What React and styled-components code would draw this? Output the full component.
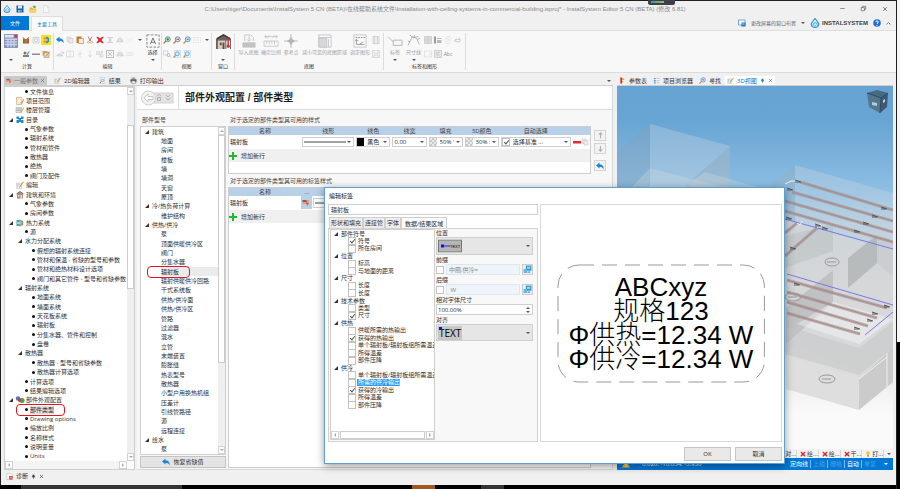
import React, { useState } from 'react';
import styled, { createGlobalStyle, css } from 'styled-components';

const GlobalStyle = createGlobalStyle`
  * {
    box-sizing: border-box;
  }

  html, body, #root {
    height: 100%;
    margin: 0;
  }

  body {
    background: #000;
    color: #2e2e2e;
    font-family: "Open Sans", "Noto Sans CJK SC", sans-serif;
    font-size: 6px;
    line-height: 8px;
  }

  button, input, select {
    font: inherit;
    color: inherit;
    margin: 0;
    padding: 0;
    border: 0;
    border-radius: 0;
    background: none;
    min-width: 0;
  }

  ul {
    list-style: none;
    margin: 0;
    padding: 0;
  }
`;

/* ---------- icons, all drawn on a 16 x 16 grid ---------- */

const GREY = '#c3c5c8';

const ICONS = {
  drop: (
    <g fill="none" stroke="#2b94cf" strokeWidth="1.8">
      <path d="M8 1 C5 5 2 7.500 2 10.500 A5.500 4.500 0 0 0 8 15 A5.500 4.500 0 0 0 14 10.500 C14 7.500 11 5 8 1Z" />
      <path d="M5 13V9.500L8.500 7l3 2.500V14M8 14v-3.500" stroke="#49b7e8" />
    </g>
  ),
  save: (
    <g>
      <path d="M1 1h14v14H1z" fill="#1d5fa8" />
      <path d="M4 1h8v6H4z" fill="#dcebf8" />
      <path d="M4 10h8v5H4z" fill="#7db4e0" />
      <path d="M9 11h2v3H9z" fill="#1d5fa8" />
    </g>
  ),
  folder: (
    <g>
      <path d="M1 5h5l2 2h6v8H1z" fill="#e8b63c" />
      <path d="M3 9h13l-3 6H1z" fill="#f7d46a" />
      <path d="M6 4C8 1 11 1 12 2l1-1v5H8l2-2C9 3 8 3 6 4z" fill="#4aa84a" />
    </g>
  ),
  page: <path d="M3 1h7l4 4v10H3zM10 1v4h4" fill="#f6f6f6" stroke="#cfcfcf" />,
  calc: (
    <g>
      <rect x="0" y="0" width="16" height="16" rx="1" fill="#8592b5" />
      <path d="M1 1h10v3H1z" fill="#dfe6f5" />
      <path d="M12 1h3v3h-3z" fill="#d8323c" />
      <path d="M1 6h14M1 9h14M1 12h14M4.500 5v10M8 5v10M11.500 5v10" stroke="#c9d3ee" strokeWidth="1.600" />
    </g>
  ),
  crate: (
    <g>
      <path d="M2 6h12v9H2z" fill="#8c5a2c" />
      <path d="M1 2l5 3-3 1zM14 2L9 5l4 1z" fill="#d33" />
      <path d="M3 8h10M3 12h10M8 6v9" stroke="#e2a052" />
    </g>
  ),
  greyDoc: (
    <g fill="none" stroke={GREY} strokeWidth="1.400">
      <path d="M2 3h12v11H2zM5 6h6v5H5zM8 1v4" />
    </g>
  ),
  yellow: (
    <g>
      <path d="M-2 -2h20v20H-2z" fill="#ffe11c" />
      <path d="M3 3h4a5 5 0 0 1 0 10H3z" fill="#f08a24" />
      <path d="M8 3a5 5 0 0 1 0 10" stroke="#2496d8" strokeWidth="3" fill="none" />
      <path d="M2 8h9" stroke="#fff" strokeWidth="1.500" />
    </g>
  ),
  person: (
    <g>
      <path d="M2 10h12v4H2z" fill="#71869a" />
      <circle cx="6" cy="6" r="3" fill="#9b6a44" />
      <path d="M9 8l5-6 1 2-4 6z" fill="#4c91c6" />
    </g>
  ),
  bar: <path d="M0 7h16v3H0z" fill="#8b8b8b" />,
  boxPen: (
    <g>
      <path d="M1 2h10v9H1z" fill="#caa878" />
      <path d="M4 5h10v10H4z" fill="#e7d7b6" stroke="#9c8355" />
      <path d="M15 3l-7 8-2 3 3-2 7-8z" fill="#d07b2c" />
    </g>
  ),
  undo: (
    <g>
      <path d="M0 7L7 1v4c6-1 9 4 8 10-1-4-4-5-8-5v3z" fill="#2183d8" />
    </g>
  ),
  copy: (
    <g fill="#ececec" stroke="#bdbdbd">
      <path d="M2 2h8v9H2z" />
      <path d="M6 5h8v9H6z" />
    </g>
  ),
  paste: (
    <g>
      <path d="M1 1h10v13H1z" fill="#c67a2c" />
      <path d="M5 5h10v10H5z" fill="#f7ecd8" stroke="#a4672a" />
    </g>
  ),
  cut: (
    <g fill="none" strokeWidth="1.500">
      <path d="M4 1l5 9M12 1L7 10" stroke="#656565" />
      <circle cx="5" cy="12.500" r="2" stroke="#d9a24a" />
      <circle cx="11" cy="12.500" r="2" stroke="#d9a24a" />
    </g>
  ),
  cross: <path d="M1 3l2-2 5 4 5-4 2 2-4 5 4 5-2 2-5-4-5 4-2-2 4-5z" fill="#dc2430" />,
  spread: <path d="M2 3h12M2 13h12M8 4v8M5 6h6M5 10h6" stroke={GREY} strokeWidth="1.500" fill="none" />,
  mirror: <path d="M8 1v14M6 4L1 12h5zM10 4l5 8h-5z" stroke={GREY} fill="#dedede" />,
  slope: <path d="M2 14L13 3M2 9l3-3M10 13l4-4" stroke="#dcdcdc" fill="none" />,
  moon: <path d="M1 12a7 7 0 0 1 13 0zM9 4h6v4" stroke={GREY} fill="#dedede" />,
  panes: <path d="M1 2h14v12H1zM8 2v12" stroke={GREY} fill="none" />,
  vline: <path d="M8 1v14M5 8h6" stroke={GREY} fill="none" />,
  vdots: <path d="M8 1v4M8 7v3M8 12v3M5 10l3 3 3-3" stroke={GREY} fill="none" strokeWidth="1.500" />,
  squares: <path d="M1 3h6v6H1zM8 8h6v6H8zM10 2h3v3h-3z" stroke={GREY} fill="#ededed" />,
  expand: <path d="M1 1h14v14H1zM4 4l8 8M12 4l-8 8" stroke="#9c9c9c" fill="none" strokeWidth="1.300" />,
  lines: <path d="M1 5h14M1 8h14M1 11h14" stroke="#d5d5d5" fill="none" />,
  marquee: (
    <g>
      <path d="M1 1h14v14H1z" fill="none" stroke="#777" strokeDasharray="3 1.500" />
      <path d="M5 11.500L8 4.500l3 7M6 9.500h4" fill="none" stroke="#666" />
    </g>
  ),
  zoomIn: (
    <g>
      <path d="M1 15l5-5" stroke="#a68246" strokeWidth="2.500" />
      <circle cx="9.500" cy="6.500" r="5" fill="#c7e2d2" stroke="#4c7a8d" strokeWidth="1.500" />
      <path d="M7 6.500h5M9.500 4v5" stroke="#1d9a3c" strokeWidth="2" />
    </g>
  ),
  zoomOut: (
    <g>
      <path d="M1 15l5-5" stroke="#a68246" strokeWidth="2.500" />
      <circle cx="9.500" cy="6.500" r="5" fill="#e6dcea" stroke="#4c7a8d" strokeWidth="1.500" />
      <path d="M7 6.500h5" stroke="#d4283c" strokeWidth="2" />
    </g>
  ),
  zoomFit: (
    <g>
      <path d="M1 15l5-5" stroke="#d38a30" strokeWidth="2.500" />
      <circle cx="9.500" cy="6.500" r="5" fill="#cfe6f9" stroke="#3c86c4" strokeWidth="1.500" />
      <path d="M7.500 6.500h4" stroke="#2b6fb4" strokeWidth="2" />
    </g>
  ),
  zoomPage: (
    <g>
      <path d="M3 1h12v14H3z" fill="#e9f3fb" stroke="#b0cbe0" />
      <path d="M1 15l4-4" stroke="#d38a30" strokeWidth="2.500" />
      <circle cx="8.500" cy="7.500" r="4" fill="#d6ecfb" stroke="#3c9bd4" strokeWidth="1.500" />
    </g>
  ),
  zoomWin: <path d="M1 3h14v10H1zM4 8h8" stroke="#d2d2d2" fill="none" strokeDasharray="3 1.500" />,
  zoomSel: (
    <g fill="none" stroke="#8e8e8e">
      <path d="M1 2h9v8H1z" strokeDasharray="2 1.500" />
      <circle cx="11" cy="10" r="3" />
      <path d="M13 12l2 3" />
    </g>
  ),
  house: (
    <g>
      <path d="M0 5L8 0l8 5v11H0z" fill="#6a6460" />
      <path d="M2 7h8v9H2z" fill="#d9ccc2" />
      <path d="M4 9h2v3H4zM7 9h2v7H7z" fill="#5f4a44" />
      <path d="M1 5l7-4 7 4" stroke="#393536" fill="none" strokeWidth="1.500" />
      <path d="M11 7h4v9h-4z" fill="#f5f5f5" />
      <path d="M13 4v8" stroke="#df2a2e" strokeWidth="1.500" />
      <circle cx="13" cy="13" r="1.700" fill="#df2a2e" />
    </g>
  ),
  importMap: (
    <g stroke={GREY} fill="none">
      <path d="M3 8V1h7l3 3v4M8 2v6M5.500 6L8 8.500 10.500 6" />
      <path d="M1 10h14v5H1z" fill="#c2c2c2" />
    </g>
  ),
  ratio: (
    <g stroke={GREY} fill="none">
      <path d="M0 3h16M2 1v4M14 1v4M6 1.500l-2 3M12 1.500l-2 3" />
      <path d="M0 8h16v6H0zM3 8v3M6 8v4M9 8v3M12 8v4" />
    </g>
  ),
  refPoint: <path d="M8 0v16M0 8h16M8 4l1.500 2.500L12 8 9.500 9.500 8 12 6.500 9.500 4 8l2.500-1.500z" stroke="#b3b3b3" fill="#b3b3b3" />,
  cropMap: (
    <g stroke={GREY} fill="none">
      <path d="M1 1h14v14H1zM1 4h14" />
      <path d="M1 5h9v10H1z" fill="#d8d8d8" />
      <path d="M12 6v9" />
    </g>
  ),
  alignMap: (
    <g stroke={GREY} fill="none">
      <path d="M1 1h14v14H1z" />
      <path d="M3 4h11" stroke="#888" strokeDasharray="2 1" />
      <path d="M4 6v6h9M2.500 8L4 6l1.500 2M7 12l5-3" stroke="#999" />
    </g>
  ),
  film: <path d="M2 1h12v14H2zM5 1v14M11 1v14" stroke="#b9b9b9" fill="#efefef" />,
  disk: <path d="M1 1h14v14H1zM4 1v5h8V1M4 15v-5h8v5" stroke={GREY} fill="#f1f1f1" />,
  tag: (
    <g stroke="#b0b0b0" fill="none">
      <path d="M0 3l6 6M6 7h10v6H6z" />
    </g>
  ),
  dimension: (
    <g stroke="#aaa" fill="none">
      <path d="M1 13L6 3l5 2 3 7M3 1l5 4M9 1l-1 3 5-1M12 6l3-1M4 9l-3-1" />
    </g>
  ),
  hatch: (
    <g stroke="#b5b5b5" fill="#dcdcdc">
      <path d="M1 1h14v14H1zM4 12l8-8M8 13l5-5M3 8l5-5" />
    </g>
  ),
  legend: (
    <g>
      <path d="M2 1v14" stroke="#777" strokeWidth="3" />
      <path d="M6 4h9v2H6zM6 8h9v6H6z" fill="#b9b9b9" />
    </g>
  ),
  list: <path d="M4 1h8v14H4zM6 4h4M6 7h4M6 10h4" stroke="#d8d8d8" fill="none" />,
  cloud: <path d="M2 8c2-3 5-1 6 0 1-3 5-2 5 1s-8 4-11 1zM9 3l3 3" stroke="#aaa" fill="none" strokeWidth="1.300" />,
  frame: <path d="M1 2h14v12H1zM9 8h6" stroke="#d0d0d0" fill="none" />,
  chart: <path d="M1 1h14v14H1zM4 5h8M4 8h3v5M8 8l4 5" stroke="#b0b0b0" fill="#e8e8e8" />,
  flag: (
    <g>
      <path d="M1 2h13v8H1z" fill="#f09a72" />
      <path d="M1 2h8v4H1z" fill="#6a6a6a" />
      <path d="M8 5l6 4-4 5z" fill="#e05a3c" />
    </g>
  ),
  pencil: (
    <g>
      <path d="M1 4h10v11H1z" fill="#f3f5f7" stroke="#b6bdc4" />
      <path d="M3 13l1-8 4 4" fill="none" stroke="#6f9abf" />
      <path d="M14 1L7 10l-1 4 3-2 7-10z" fill="#dca04e" />
    </g>
  ),
  report: (
    <g>
      <path d="M3 1h10v14H3z" fill="#f6f9fc" stroke="#a6b8c8" />
      <circle cx="8" cy="8" r="3" fill="#d5eafa" stroke="#2f7fc0" />
      <path d="M2 14l3-3" stroke="#c64838" strokeWidth="2" />
    </g>
  ),
  printer: (
    <g>
      <path d="M4 1h8v4H4z" fill="#9ba3ab" />
      <path d="M1 5h14v7H1z" fill="#59626b" />
      <path d="M4 9h8v6H4z" fill="#f2f2f2" stroke="#59626b" />
    </g>
  ),
  scope: (
    <g>
      <path d="M1 1h11v14H1z" fill="#fff5e4" stroke="#d58a38" />
      <circle cx="7" cy="8" r="4" fill="#fff" stroke="#b9b2a4" />
      <path d="M9 13l6-9 1 2-5 8z" fill="#e08833" />
    </g>
  ),
  floors: (
    <g>
      <path d="M0 3h12v10H0z" fill="#dfe2e0" stroke="#9aa19d" />
      <path d="M1 6h10M1 9h10" stroke="#7b8782" />
      <path d="M16 2l-7 9-1 3 3-2 5-7z" fill="#c9b65a" />
    </g>
  ),
  catalog: <path d="M1 1h5v3h4V1h5v5h-5v2h5v6h-5v-2H6v2H1V8h4V6H1z" fill="#1f88d8" />,
  home: (
    <g>
      <path d="M2 5l6-4 6 4v10H2z" fill="#a88e86" />
      <path d="M1 6l7-5 7 5" fill="none" stroke="#6f6a68" strokeWidth="2" />
      <path d="M4 8h3v3H4zM9 8h3v7H9z" fill="#e7dfd9" />
    </g>
  ),
  heat: (
    <g>
      <path d="M1 2h6v12H1z" fill="#27a8e0" />
      <path d="M6 1a7 7 0 0 1 0 14z" fill="#ef8f2e" />
      <path d="M12 3a8 8 0 0 1 0 10" stroke="#2aa4dd" strokeWidth="2" fill="none" />
      <path d="M2 8h7" stroke="#fff" strokeWidth="2" />
    </g>
  ),
  parts: (
    <g>
      <circle cx="4" cy="5" r="4.500" fill="#3f7fd0" />
      <circle cx="12" cy="9" r="5" fill="#35ac52" />
      <path d="M3 7l5-4 3 6-5 4z" fill="#da3838" />
    </g>
  ),
  ruler: (
    <g>
      <path d="M3 1h4v14H3z" fill="#c9332d" />
      <path d="M7 3h5v4H7zM7 9h3v3H7z" fill="#e8a531" />
    </g>
  ),
  browser: (
    <g>
      <path d="M2 2h4v3H2zM2 7h4v3H2zM2 12h4v3H2z" fill="#4f92d2" />
      <path d="M8 3h7M8 8h7M8 13h7" stroke="#9b9b9b" />
    </g>
  ),
  diag: (
    <g>
      <path d="M2 1h9l3 3v11H2z" fill="#fff" stroke="#a3a3a3" />
      <path d="M7 7h8v8H7z" fill="#dd3a3a" />
      <path d="M9 9l4 4M13 9l-4 4" stroke="#fff" />
    </g>
  ),
  plus: <path d="M6 0h4v6h6v4h-6v6H6v-6H0V6h6z" fill="#20b835" />,
  minus: <path d="M0 6h16v5H0z" fill="#dc2c34" />,
  up: <path d="M8 2v12M4 6l4-4 4 4" stroke="#b0b0b0" strokeWidth="2.500" fill="none" />,
  down: <path d="M8 2v12M4 10l4 4 4-4" stroke="#b0b0b0" strokeWidth="2.500" fill="none" />,
  screen: (
    <g>
      <path d="M5 1h10v9H5z" fill="#2f90d8" />
      <path d="M7 3h6v4H7z" fill="#9ed1f4" />
      <path d="M1 7h6v7H1zM8 11h5v3H8z" fill="#67b4e6" />
    </g>
  ),
  layout: (
    <g>
      <path d="M1 2h13v10H1z" fill="#fff" stroke="#3b8cd2" strokeWidth="1.500" />
      <path d="M7 7h8v8H7z" fill="#2472b8" />
      <path d="M9 9h4v2H9z" fill="#d4e8f8" />
    </g>
  ),
  help: (
    <g>
      <circle cx="8" cy="8" r="7.500" fill="#1e6fcf" />
      <path d="M5.500 6C5.500 3 10.500 3 10.500 6 10.500 8 8 8 8 10" stroke="#fff" strokeWidth="2" fill="none" />
      <circle cx="8" cy="12.500" r="1.200" fill="#fff" />
    </g>
  ),
  warn: (
    <g>
      <path d="M8 1l8 14H0z" fill="#f7b928" />
      <path d="M8 6v5M8 12v2" stroke="#fff" strokeWidth="1.500" />
    </g>
  ),
  bulb: (
    <g>
      <circle cx="8" cy="5" r="4.500" fill="#f6b928" />
      <path d="M6 9h4v6H6z" fill="#c98a2a" />
    </g>
  ),
  pin: <path d="M5 2h6v6h2v2H9v5H7v-5H3V8h2z" fill="currentColor" />,
  close: <path d="M3 3l10 10M13 3L3 13" stroke="currentColor" strokeWidth="2" fill="none" />,
  minimize: <path d="M1 8h14" stroke="#555" strokeWidth="2" />,
  restore: <path d="M1 5h10v10H1zM4 5V1h11v10h-4" stroke="#555" strokeWidth="2" fill="none" />,
  chevron: <path d="M2 11l6-6 6 6" stroke="#555" strokeWidth="2.500" fill="none" />,
};

const Svg = styled.svg`
  width: ${props => props.$size}px;
  height: ${props => props.$size}px;
  flex: none;
  display: block;
  overflow: visible;
`;

const Icon = ({ name, size = 8 }) => (
  <Svg $size={size} viewBox="0 0 16 16" aria-hidden="true">{ICONS[name]}</Svg>
);

const Caret = styled.span`
  flex: none;
  width: 0;
  height: 0;
  border: 2px solid transparent;
  border-top-color: ${props => props.$color || '#555'};
  border-bottom-width: 0;
`;

/* ---------- window frame ---------- */

const Desktop = styled.div`
  position: relative;
  height: 100vh;
  min-height: 480px;
  display: flex;
  flex-direction: column;
  padding: 1px 4px 0 1px;
  background: #231f22;
  overflow: hidden;

  &::after {
    content: '';
    position: absolute;
    top: 0;
    right: 0;
    width: 3px;
    height: 100%;
    background: linear-gradient(#f5f5f5 70%, #000 70%);
  }
`;

const Notch = styled.div`
  position: absolute;
  z-index: 2;
  top: 0;
  left: 72%;
  width: 27px;
  height: 5px;
  padding: 1px 11px 2px 3px;
  border-radius: 0 0 2px 2px;
  background: #3d3f4d;

  &::before {
    content: '';
    display: block;
    height: 2px;
    background: linear-gradient(90deg, #3c9c9c, #a8b850);
  }
`;

const Window = styled.div`
  flex: 1;
  min-height: 0;
  display: flex;
  flex-direction: column;
  background: #f0f0f0;
`;

const Taskbar = styled.footer`
  flex: none;
  display: grid;
  grid-template-columns: 21fr 161fr 230fr 23fr 45fr 23fr 392fr;
  height: 4px;
  margin-left: -1px;
  background: #000;
`;

const TaskItem = styled.span`
  grid-column: ${props => props.$col};
  background: ${props => props.$color};
`;

const TitleBar = styled.header`
  flex: none;
  display: flex;
  align-items: center;
  height: 15px;
  padding: 0 8px 0 2px;
`;

const QuickAccess = styled.div`
  display: flex;
  gap: 5px;
`;

const WindowTitle = styled.div`
  flex: 1;
  text-align: center;
  color: #8a8a8a;
  font-family: "Liberation Sans", "Noto Sans CJK SC", sans-serif;
  white-space: nowrap;
`;

const WindowButtons = styled.div`
  display: flex;
  gap: 16px;
`;

const IconButton = styled.button`
  display: flex;
  align-items: center;
  justify-content: center;
  color: ${props => props.$color || '#555'};
`;

const RibbonTabs = styled.nav`
  flex: none;
  display: flex;
  align-items: stretch;
  height: 15px;
  padding-right: 5px;
  border-bottom: 1px solid #dedede;
  font-size: 5px;
`;

const FileTab = styled.button`
  width: 28px;
  background: #0078d7;
  color: #fff;
`;

const MainTab = styled.button`
  width: 32px;
  margin: 0 0 -1px 2px;
  border: 1px solid #dedede;
  border-bottom: 0;
  background: #f9f9f9;
  color: #0a74cc;
`;

const RibbonRight = styled.div`
  display: flex;
  align-items: center;
  gap: 5px;
  margin-left: auto;
  color: #666;
`;

const Brand = styled.div`
  display: flex;
  align-items: center;
  gap: 2px;
  color: #3d4247;
  font-size: 6px;
  font-weight: 600;
  font-family: "Liberation Sans", sans-serif;
`;

/* ---------- ribbon ---------- */

const Ribbon = styled.div`
  flex: none;
  display: flex;
  height: 42px;
  padding: 2px 0 0;
  background: #f8f8f8;
  border-bottom: 1px solid #dcdcdc;
  font-size: 5px;
`;

const Group = styled.section`
  display: flex;
  flex-direction: column;
  width: ${props => props.$width}px;
  margin-bottom: 2px;
  border-right: 1px solid #dcdcdc;
`;

const GroupBody = styled.div`
  flex: 1;
  display: flex;
  justify-content: center;
  gap: ${props => props.$gap || 0}px;
`;

const GroupName = styled.div`
  height: 7px;
  line-height: 7px;
  text-align: center;
  color: #333;
`;

const ToolGrid = styled.div`
  display: grid;
  grid-template-columns: repeat(${props => props.$cols}, 10px);
  grid-template-rows: 14px 14px;
  align-content: start;
`;

const SmallTool = styled.button`
  display: flex;
  align-items: center;
  justify-content: center;
  color: #888;
`;

const BigTool = styled.button`
  display: flex;
  flex-direction: column;
  align-items: center;
  gap: 1px;
  width: ${props => props.$width}px;
  height: 28px;
  padding-top: 1px;
  line-height: 6px;
  color: ${props => (props.$muted ? '#a2a2a2' : '#333')};
  white-space: nowrap;

  ${Caret} {
    margin-top: auto;
  }
`;

const Big = ({ icon, label, width, muted, caret, size = 14 }) => (
  <BigTool $width={width} $muted={muted} aria-label={label || icon}>
    <Icon name={icon} size={size} />
    {label && <span>{label}</span>}
    {caret && <Caret />}
  </BigTool>
);

const Tools = ({ cols, names }) => (
  <ToolGrid $cols={cols}>
    {names.map((name, i) => {
      if (name === 'caret') return <SmallTool key={i} aria-label="more"><Caret /></SmallTool>;
      if (name === 'Abc') return <SmallTool key={i}>Abc</SmallTool>;
      if (!name) return <span key={i} />;
      return <SmallTool key={i} aria-label={name}><Icon name={name} /></SmallTool>;
    })}
  </ToolGrid>
);

/* ---------- work area ---------- */

const Workspace = styled.main`
  flex: 1;
  min-height: 0;
  display: grid;
  grid-template-columns: 609fr 276fr;
  gap: 4px;
  padding: 3px 3px 0;
`;

const Pane = styled.div`
  min-width: 0;
  min-height: 0;
  display: flex;
  flex-direction: column;
`;

const TabStrip = styled.div`
  flex: none;
  display: flex;
  align-items: stretch;
  gap: ${props => props.$gap}px;
  height: 10px;
  padding-right: 2px;
  border-bottom: 1px solid #cfcfcf;

  > ${Caret} {
    align-self: center;
    margin-left: auto;
  }
`;

const DocTab = styled.button`
  display: flex;
  align-items: center;
  gap: ${props => (props.$tone === 'grey' ? 2 : 3)}px;
  padding: 0 2px;
  white-space: nowrap;
  color: ${props => (props.$tone === 'blue' ? '#0a74cc' : props.$tone === 'grey' ? '#777' : '#333')};
  background: ${props => (props.$tone === 'blue' ? '#fff' : props.$tone === 'grey' ? '#c9c9c9' : 'none')};
`;

const Columns = styled.div`
  flex: 1;
  min-height: 0;
  display: grid;
  grid-template-columns: 131px 1fr;
  gap: 2px;
`;

const TreeBox = styled.div`
  min-height: 0;
  display: grid;
  grid-template-columns: 1fr 7px;
  grid-template-rows: 1fr auto;
  background: #fff;
  border: 1px solid #cfcfcf;
  overflow: hidden;
`;

const Rows = styled.ul`
  min-height: 0;
  min-width: 0;
  display: grid;
  grid-auto-rows: minmax(0, 1fr);
  overflow: hidden;
`;

const Row = styled.li`
  display: flex;
  align-items: center;
  gap: 2px;
  position: relative;
  padding-left: ${props => props.$indent}px;
  white-space: nowrap;
  background: ${props => (props.$shaded ? '#ebebeb' : 'none')};
  background-clip: content-box;
`;

const Marked = styled.span`
  position: relative;
  background: ${props => (props.$shaded ? '#e2e2e2' : 'none')};

  &::after {
    content: '';
    position: absolute;
    inset: -2px -11px -2px -14px;
    border: 1px solid #e5141f;
    border-radius: 4px;
  }
`;

const Twisty = styled.span`
  flex: none;
  width: 0;
  height: 0;
  margin-right: 1px;
  border: 2px solid #333;
  border-top-color: transparent;
  border-left-color: transparent;
`;

const Dot = styled.span`
  flex: none;
  width: 3px;
  height: 3px;
  border-radius: 50%;
  background: #111;
`;

const VScroll = styled.div`
  display: grid;
  grid-template-rows: 8px ${props => props.$before} ${props => props.$thumb} 1fr 8px;
  justify-items: stretch;
  background: #efefef;
`;

const ScrollButton = styled.button`
  display: flex;
  align-items: center;
  justify-content: center;
  border: 1px solid #d3d3d3;
  background: #fdfdfd;

  ${Caret} {
    transform: rotate(${props => props.$turn || 0}deg);
  }
`;

const VThumb = styled.span`
  grid-row: 3;
  border: 1px solid #cdcdcd;
  background: #fff;
`;

const ScrollEnd = styled(ScrollButton)`
  grid-row: 5;
`;

const HScroll = styled.div`
  display: flex;
  justify-content: space-between;
  height: 8px;
  background: #f4f4f4;

  ${ScrollButton} {
    width: 8px;
  }
`;

const HThumb = styled.span`
  flex: 1;
  margin: 0 1px;
  border: 1px solid #cdcdcd;
  background: #fff;
`;

const VerticalScroll = ({ before, thumb }) => (
  <VScroll $before={before} $thumb={thumb}>
    <ScrollButton aria-label="up" $turn={180}><Caret $color="#aaa" /></ScrollButton>
    <VThumb />
    <ScrollEnd aria-label="down"><Caret $color="#aaa" /></ScrollEnd>
  </VScroll>
);

const HorizontalScroll = ({ full }) => (
  <HScroll>
    <ScrollButton aria-label="left" $turn={90}><Caret $color="#aaa" /></ScrollButton>
    {full && <HThumb />}
    <ScrollButton aria-label="right" $turn={270}><Caret $color="#aaa" /></ScrollButton>
  </HScroll>
);

const Editor = styled.div`
  min-width: 0;
  min-height: 0;
  display: flex;
  flex-direction: column;
  background: #f7f7f7;
  border-right: 1px solid #d8d8d8;
  border-bottom: 1px solid #d8d8d8;
  overflow: hidden;
`;

const EditorHead = styled.div`
  flex: none;
  display: flex;
  align-items: center;
  height: 24px;
  background: #fff;
  border-bottom: 1px solid #dcdcdc;
`;

const NavButtons = styled.div`
  display: flex;
  align-items: center;
  align-self: stretch;
  width: 42px;
  padding-left: 4px;
  border-right: 1px solid #dcdcdc;
`;

const Heading = styled.h1`
  margin: 0;
  padding-left: 6px;
  font-family: "Liberation Sans", "Noto Sans CJK SC", sans-serif;
  font-size: 10px;
  line-height: 14px;
  font-weight: 700;
  color: #1c1c1c;
`;

const EditorBody = styled.div`
  flex: 1;
  min-height: 0;
  display: grid;
  grid-template-columns: 86px 1fr;
  gap: 2px;
  padding: 6px 6px 1px 3px;
`;

const Stack = styled.div`
  min-width: 0;
  min-height: 0;
  display: flex;
  flex-direction: column;
`;

const PartBox = styled(TreeBox)`
  flex: 1;
`;

const Caption = styled.div`
  flex: none;
  height: 10px;
  margin-top: ${props => props.$top || 0}px;
  padding-left: 2px;
  white-space: nowrap;
  color: #444;
`;

const RestoreButton = styled.button`
  flex: none;
  display: flex;
  align-items: center;
  justify-content: center;
  gap: 3px;
  height: 12px;
  margin-top: 1px;
  border: 1px solid #c4c4c4;
  background: #e4e4e4;
`;

const StyleArea = styled.div`
  display: grid;
  grid-template-columns: 1fr 12px;
  gap: 3px;
`;

const TableBox = styled.div`
  min-height: ${props => props.$min}px;
  flex: ${props => (props.$fill ? 1 : 'none')};
  margin-right: ${props => (props.$fill ? 15 : 0)}px;
  border: 1px solid #cdcdcd;
  background: #fff;
`;

const StyleTable = styled.table`
  width: 100%;
  table-layout: fixed;
  border-collapse: collapse;

  th {
    height: 8px;
    padding: 0;
    background: #b9d1e8;
    font-weight: 400;
    color: #444;
    line-height: 8px;
  }

  td {
    height: 13px;
    padding: 1px;
  }
`;

const Col = styled.col`
  width: ${props => props.$width};
`;

const EditCell = styled.td`
  background: #b9d1e8;
`;

const AddRow = styled.button`
  display: flex;
  align-items: center;
  gap: 4px;
  width: 100%;
  height: 13px;
  margin-top: 1px;
  background: #f0f0f0;
`;

const SelectFrame = styled.span`
  position: relative;
  display: flex;
  align-items: center;
  gap: 2px;
  height: ${props => props.$height || 10}px;
  padding-right: 2px;
  border: 1px solid #cfcfcf;
  background: ${props => props.$bg || '#fff'};

  select {
    flex: 1;
    width: 10px;
    height: 100%;
    appearance: none;
    padding-left: 1px;
  }
`;

const SelectArt = styled.svg`
  position: absolute;
  left: 1px;
  top: 50%;
  transform: translateY(-50%);
  width: ${props => props.$width};
  height: ${props => props.$height}px;
  pointer-events: none;
`;

const Swatch = styled.span`
  flex: none;
  width: 7px;
  height: 8px;
  background: ${props =>
    props.$solid ? '#000' : 'repeating-conic-gradient(#c9c9c9 0 25%, #e9e9e9 0 50%) 0 0 / 4px 4px'};
`;

const Check = styled.input`
  appearance: none;
  position: relative;
  flex: none;
  width: 8px;
  height: 8px;
  border: 1px solid #c2c2c2;
  background: #fff;

  &:checked::after {
    content: '';
    position: absolute;
    left: 2px;
    top: 0;
    width: 2px;
    height: 4px;
    border: solid #555;
    border-width: 0 1px 1px 0;
    transform: rotate(40deg);
  }
`;

const RowActions = styled.span`
  display: flex;
  align-items: center;
  gap: 1px;
`;

const SideButtons = styled.div`
  display: flex;
  flex-direction: column;
  gap: 2px;
  padding-top: 4px;

  button {
    height: 11px;
    border: 1px solid #d4d4d4;
    background: #f3f3f3;
  }

  button:last-child {
    margin-top: 4px;
  }
`;

/* ---------- model view ---------- */

const Viewport = styled.div`
  flex: 1;
  min-height: 0;
  background: linear-gradient(#66a3d3 0, #69a5d4 10%, #8fc0e4 30%, #b4cede 38%, #d9dadb 55%, #ececec 80%, #fafafa 90%);

  svg {
    display: block;
    width: 100%;
    height: 100%;
  }
`;

const SheetTabs = styled.div`
  flex: none;
  display: flex;
  align-items: center;
  justify-content: flex-end;
  gap: 3px;
  height: 9px;
  padding-right: 2px;
  background: #f2f2f2;
`;

const SheetTab = styled.button`
  display: flex;
  align-items: center;
  gap: 1px;
  border-right: 1px solid #d5d5d5;
`;

const StatusBar = styled.div`
  flex: none;
  display: flex;
  align-items: center;
  height: 12px;
  padding: 0 5px;
  background: #0078d7;
  color: #fff;
  white-space: nowrap;
`;

const Coordinates = styled.span`
  flex: 1;
  padding-left: 12px;
`;

const StatusToggle = styled.button`
  padding: 0 2px;
  border-right: 1px solid #7fbcea;
  color: ${props => (props.$on ? '#fff' : '#4f9fde')};

  &:last-of-type {
    border: 0;
    margin-right: 6px;
  }
`;

const Footer = styled.div`
  flex: none;
  height: 15px;
  padding: 2px 3px;
`;

/* ---------- label dialog ---------- */

const Dialog = styled.div`
  position: absolute;
  z-index: 3;
  inset: 187px 115px 25px 324px;
  display: flex;
  flex-direction: column;
  padding: 4px 2px 2px 3px;
  border: 1px solid #5d9fd2;
  background: #fff;
  box-shadow: 0 2px 8px rgba(0, 0, 0, 0.4);
`;

const DialogTitle = styled.h2`
  flex: none;
  height: 12px;
  margin: 0;
  padding-left: 1px;
  font-size: 6px;
  line-height: 8px;
  font-weight: 400;
  color: #111;
`;

const DialogBody = styled.div`
  flex: 1;
  min-height: 0;
  display: grid;
  grid-template-columns: 210px 1fr;
  gap: 2px;
`;

const TextField = styled.input`
  height: 11px;
  padding-left: 2px;
  border: 1px solid ${props => (props.$soft ? '#dde7f0' : '#cfcfcf')};
  background: ${props => (props.$soft ? '#eef4fa' : '#fff')};
  color: ${props => (props.$soft ? '#888' : '#333')};
  width: 100%;
`;

const DialogTabs = styled.div`
  flex: none;
  display: flex;
  height: 11px;
  margin-top: 2px;
  padding-left: 1px;
`;

const DialogTab = styled.button`
  padding: 0 1px;
  border: 1px solid #cfcfcf;
  border-bottom: 0;
  background: #ededed;
  white-space: nowrap;

  ${props => props.$active && css`
    padding: 0 3px;
    margin-bottom: -1px;
    background: #fafafa;
  `}
`;

const TabPanel = styled.div`
  flex: 1;
  min-height: 0;
  display: grid;
  grid-template-columns: 105px 1fr;
  gap: 1px;
  padding: 0 4px 1px 1px;
  border: 1px solid #d2d2d2;
  background: #f8f8f8;
`;

const DataBox = styled(Stack)`
  justify-content: space-between;
  border: 1px solid #cfcfcf;
  background: #fff;
  overflow: hidden;

  ${Rows} {
    flex: 1;
    margin-bottom: 22px;
  }
`;

const CheckLabel = styled.label`
  display: flex;
  align-items: center;
  gap: 1px;
  white-space: nowrap;

  span {
    padding-left: 1px;
    line-height: 7px;
    background: ${props => (props.$selected ? '#3097f2' : 'none')};
    color: ${props => (props.$selected ? '#fff' : 'inherit')};
  }
`;

const Field = styled.div`
  display: flex;
  flex-direction: column;
  margin-bottom: 1px;
`;

const FieldRow = styled.div`
  display: flex;
  align-items: center;
  gap: 2px;

  > button {
    flex: none;
    width: 11px;
    height: 11px;
    border: 1px solid #ccc;
    background: #f0f0f0;
  }
`;

const Spin = styled.div`
  display: flex;
  align-items: center;
  border: 1px solid #cfcfcf;
  background: #fff;
  padding-right: 2px;

  input {
    flex: 1;
    height: 9px;
    padding-left: 1px;
  }
`;

const SpinArrows = styled.span`
  display: flex;
  flex-direction: column;
  gap: 2px;

  ${Caret}:first-child {
    transform: rotate(180deg);
  }
`;

const Preview = styled.div`
  display: flex;
  align-items: center;
  justify-content: center;
  border: 1px solid #d9d9d9;
  background: #fff;
`;

const PreviewLabel = styled.div`
  position: relative;
  width: 86%;
  padding: 10px 0 11px;
  text-align: center;
  font-family: "Liberation Sans", "Noto Sans CJK SC", sans-serif;
  font-size: 26px;
  line-height: 24px;
  font-weight: 300;
  color: #000;
  white-space: nowrap;

  svg {
    position: absolute;
    inset: 0;
    width: 100%;
    height: 100%;
    overflow: visible;
  }
`;

const DialogButtons = styled.div`
  flex: none;
  display: flex;
  justify-content: flex-end;
  gap: 4px;
  padding-top: 5px;
`;

const PushButton = styled.button`
  width: 47px;
  height: 14px;
  border: 1px solid #c6c6c6;
  background: #e9e9e9;
`;

/* ---------- data ---------- */

// [level, kind, text, icon]; kind: g = group, d = dotted leaf, i = leaf with an icon
const PROJECT_TREE = [
  [1, 'd', '文件信息'], [0, 'i', '项目范围', 'scope'], [0, 'i', '楼层管理', 'floors'],
  [0, 'g', '目录', 'catalog'],
  [1, 'd', '气象参数'], [1, 'd', '辐射系统'], [1, 'd', '管材和管件'],
  [1, 'd', '散热器'], [1, 'd', '绝热'], [1, 'd', '阀门及配件'],
  [0, 'i', '编辑', 'pencil'],
  [0, 'g', '建筑和环境', 'home'],
  [1, 'd', '气象参数'], [1, 'd', '房间参数'],
  [0, 'g', '热力系统', 'heat'],
  [1, 'd', '源'],
  [1, 'g', '水力分配系统'],
  [2, 'd', '假想的辐射系统连接'], [2, 'd', '管材和保温 - 省缺的型号和参数'],
  [2, 'd', '管材和绝热材料设计选项'], [2, 'd', '阀门和其它管件 - 型号和省缺参数'],
  [1, 'g', '辐射系统'],
  [2, 'd', '地面系统'], [2, 'd', '墙面系统'], [2, 'd', '天花板系统'], [2, 'd', '辐射板'],
  [2, 'd', '分集水器、管件和控制'], [2, 'd', '盘卷'],
  [1, 'g', '散热器'],
  [2, 'd', '散热器 - 型号和省缺参数'], [2, 'd', '散热器计算选项'],
  [1, 'd', '计算选项'], [1, 'd', '结果编辑选项'],
  [0, 'g', '部件外观配置', 'parts'],
  [1, 'd', '部件类型'], [1, 'd', 'Drawing options'], [1, 'd', '缩放比例'],
  [1, 'd', '名称样式'], [1, 'd', '说明变量'], [1, 'd', 'Units'],
];

const PART_TYPES = [
  ['建筑', ['地面', '房间', '楼板', '墙', '墙洞', '天窗', '屋顶']],
  ['冷/热负荷计算', ['维护结构']],
  ['供热/供冷', [
    '泵', '顶面供暖供冷区', '阀门', '分集水器', '辐射板', '辐射供暖供冷回路', '干式系统板',
    '供热/供冷面', '供热/供冷区', '管路', '过滤器', '混水', '立管', '末端装置', '膨胀缝',
    '热表型号', '散热器', '小型户用换热机组', '压差计', '引线管路径', '源', '远程连接',
  ]],
  ['给水', ['泵']],
];

const DATA_FIELDS = [
  ['部件符号', ['符号', '所在房间']],
  ['位置', ['标高', '与地面的距离']],
  ['尺寸', ['长度', '长度']],
  ['技术参数', ['类型', '尺寸']],
  ['供热', ['供暖所需的热输出', '获得的热输出', '单个辐射板/辐射板组所需温差', '所得温差', '部件压降']],
  ['供冷', ['单个辐射板/辐射板组所需温差', '所需的供冷输出', '获得的冷输出', '所得温差', '部件压降']],
];

const INITIAL_CHECKS = ['部件符号-0', '技术参数-1', '供热-1', '供冷-2'];

/* ---------- pieces ---------- */

const indentOf = (level, kind) => {
  if (kind === 'g') return [4, 13][level];
  if (kind === 'i') return 11;
  return [11, 20, 27][level];
};

const ProjectTree = () => (
  <TreeBox>
    <Rows>
      {PROJECT_TREE.map(([level, kind, text, icon], i) => (
        <Row key={i} $indent={indentOf(level, kind)}>
          {kind === 'g' && <Twisty />}
          {kind === 'd' && <Dot />}
          {icon && <Icon name={icon} />}
          {text === '部件类型' ? <Marked $shaded>{text}</Marked> : <span>{text}</span>}
        </Row>
      ))}
    </Rows>
    <VerticalScroll before="30px" thumb="1fr" />
    <HorizontalScroll />
  </TreeBox>
);

const PartList = () => (
  <PartBox>
    <Rows>
      {PART_TYPES.map(([group, items]) => (
        <React.Fragment key={group}>
          <Row $indent={4}><Twisty /><span>{group}</span></Row>
          {items.map(item => (
            <Row key={item} $indent={20} $shaded={item === '辐射板'}>
              {item === '辐射板' ? <Marked>{item}</Marked> : <span>{item}</span>}
            </Row>
          ))}
        </React.Fragment>
      ))}
    </Rows>
    <VerticalScroll before="0px" thumb="228px" />
  </PartBox>
);

const TableSelect = ({ label, value, swatch, check, children }) => (
  <SelectFrame>
    {check && <Check type="checkbox" defaultChecked aria-label="自动" />}
    {swatch && <Swatch $solid={swatch === 'solid'} />}
    <select aria-label={label}><option>{value}</option></select>
    {children}
    <Caret />
  </SelectFrame>
);

const StylesTable = () => (
  <TableBox $min={48}>
    <StyleTable>
      <colgroup>
        <Col $width="20%" /><Col $width="15%" /><Col $width="10%" /><Col $width="10%" />
        <Col $width="10%" /><Col $width="10%" /><Col $width="20%" /><Col $width="5%" />
      </colgroup>
      <thead>
        <tr>
          {['名称', '线形', '线色', '线宽', '填充', '3D颜色', '自动选择', ''].map((h, i) => <th key={i}>{h}</th>)}
        </tr>
      </thead>
      <tbody>
        <tr>
          <td>辐射板</td>
          <td>
            <TableSelect label="线形" value="">
              <SelectArt $width="42px" $height={2} viewBox="0 0 42 2"><path d="M0 1h42" stroke="#444" /></SelectArt>
            </TableSelect>
          </td>
          <td><TableSelect label="线色" value="黑色" swatch="solid" /></td>
          <td><TableSelect label="线宽" value="0.00" /></td>
          <td><TableSelect label="填充" value="50% '" swatch="mesh" /></td>
          <td><TableSelect label="3D颜色" value="30% :" swatch="mesh" /></td>
          <td><TableSelect label="自动选择" value="选择基准 ..." check /></td>
          <td>
            <RowActions>
              <IconButton aria-label="删除"><Icon name="minus" /></IconButton>
              <IconButton aria-label="复制"><Icon name="copy" /></IconButton>
            </RowActions>
          </td>
        </tr>
      </tbody>
    </StyleTable>
    <AddRow><Icon name="plus" />增加新行</AddRow>
  </TableBox>
);

const LabelStylesTable = () => (
  <TableBox $fill $min={40}>
    <StyleTable>
      <colgroup>
        <Col $width="20%" /><Col $width="3%" /><Col $width="15%" /><Col $width="62%" />
      </colgroup>
      <thead><tr><th>名称</th><th>...</th><th /><th /></tr></thead>
      <tbody>
        <tr>
          <td>辐射板</td>
          <EditCell><IconButton aria-label="编辑标签"><Icon name="flag" /></IconButton></EditCell>
          <td>
            <TableSelect label="线形" value="">
              <SelectArt $width="42px" $height={2} viewBox="0 0 42 2"><path d="M0 1h42" stroke="#444" /></SelectArt>
            </TableSelect>
          </td>
          <td />
        </tr>
      </tbody>
    </StyleTable>
    <AddRow><Icon name="plus" />增加新行</AddRow>
  </TableBox>
);

const PIPES = [
  'M183 96L276 124', 'M175 106L276 135', 'M168 115L276 146', 'M168 125L276 156',
  'M180 137L168 147', 'M200 142L168 170',
  'M170 194L270 222', 'M170 206L260 232', 'M170 216L251 240', 'M170 227L243 248',
];

const TAGS = [
  [267, 122], [258, 130], [249, 137], [240, 145], [181, 95], [173, 103], [172, 132], [201, 139],
  [208, 142], [176, 162], [180, 198], [270, 220], [258, 227], [253, 234], [240, 242],
];

const Model = () => (
  <Viewport>
    <svg viewBox="0 0 276 363" preserveAspectRatio="none" role="img" aria-label="3D视图">
      <g fill="#d5dbe0" fillOpacity="0.3">
        <path d="M33 38L113 60V150L33 130Z" />
        <path d="M33 38L0 66V150L33 130Z" fill="#8aa0b0" />
        <path d="M113 60L70 98V150H113Z" fill="#8aa0b0" />
        <path d="M33 82L110 102L60 120L15 101Z" />
        <path d="M88 86L140 101L110 130L70 98Z" />
        <path d="M178 79L276 107V300L178 260Z" />
        <path d="M178 79L150 102V280L178 260Z" fill="#9aabb8" />
      </g>
      <path d="M168 134L276 164V262L242 293L168 269Z" fill="#d4d5d6" fillOpacity="0.7" />
      <path d="M216 138V165L168 182V150Z" fill="#aeb4b8" fillOpacity="0.35" />
      <path d="M260 149L231 172V202L260 177Z" fill="#a5a8aa" fillOpacity="0.6" />
      <path d="M260 149L276 154V190L260 177Z" fill="#c4c6c8" fillOpacity="0.5" />
      <path d="M216 184L169 222V258L216 216Z" fill="#b0b2b4" fillOpacity="0.6" />
      <path d="M216 216L276 233L242 258L180 238Z" fill="#fff" fillOpacity="0.35" />
      <path d="M169 240L242 262L276 236V262L242 289L169 268Z" fill="#c4c5c6" fillOpacity="0.5" />
      <path d="M169 269L242 293V324L169 303Z" fill="#dedede" />
      <path d="M242 293L276 262V296L242 324Z" fill="#cbcbcb" />
      <path d="M270 267V301M242 293L270 271" stroke="#eee" fill="none" />
      {PIPES.map(d => (
        <g key={d} fill="none">
          <path d={d} stroke="#8f8a8a" strokeOpacity="0.6" strokeWidth="3" />
          <path d={d} stroke="#bb8886" strokeWidth="1" />
        </g>
      ))}
      <path d="M168 133L276 163M170 188L276 219M276 226L248 249" stroke="#7878ea" fill="none" />
      <path d="M168 98L174 95L180 95M180 137l3 2 2-4M200 142l4-4" stroke="#eee" fill="none" />
      {TAGS.map(([x, y]) => (
        <path key={`${x}-${y}`} d={`M${x - 3} ${y - 1}l6 2M${x - 3} ${y + 1}h5`} stroke="#555" strokeWidth="1" />
      ))}
      <g fill="none" stroke="#999">
        <ellipse cx="215" cy="176" rx="7" ry="4" />
        <ellipse cx="210" cy="293" rx="8" ry="4" />
        <ellipse cx="176" cy="211" rx="8" ry="4" />
        <path d="M210 176h9M205 293h9M171 211h9" />
      </g>
      <path d="M250 7L260 4L271 7L264 12Z" fill="#466a84" />
      <path d="M250 7L264 12L263 27L252 21Z" fill="#54768e" />
      <path d="M264 12L271 7L270 21L263 27Z" fill="#3c5b73" />
      <path d="M250 7L264 12L271 7M264 12L263 27" fill="none" stroke="#2f4a5e" />
      <path d="M255 16l5 1v3l-5-1zM266 14l2-1v3l-2 1zM259 7l3 1" fill="#b7cbd8" />
    </svg>
  </Viewport>
);

const DataTree = () => {
  const [checked, setChecked] = useState(INITIAL_CHECKS);

  const toggle = (id) => {
    setChecked(checked.includes(id) ? checked.filter(c => c !== id) : [...checked, id]);
  };

  return (
    <DataBox>
      <Rows>
        {DATA_FIELDS.map(([group, items]) => (
          <React.Fragment key={group}>
            <Row $indent={3}><Twisty /><span>{group}</span></Row>
            {items.map((item, i) => (
              <Row key={i} $indent={17}>
                <CheckLabel $selected={item === '所需的供冷输出'}>
                  <Check
                    type="checkbox"
                    checked={checked.includes(`${group}-${i}`)}
                    onChange={() => toggle(`${group}-${i}`)}
                  />
                  <span>{item}</span>
                </CheckLabel>
              </Row>
            ))}
          </React.Fragment>
        ))}
      </Rows>
      <HorizontalScroll full />
    </DataBox>
  );
};

const LabelDialog = () => (
  <Dialog role="dialog" aria-labelledby="dialog-title">
    <DialogTitle id="dialog-title">编辑标签</DialogTitle>
    <DialogBody>
      <Stack>
        <TextField aria-label="名称" defaultValue="辐射板" />
        <DialogTabs>
          <DialogTab>形状和填充</DialogTab>
          <DialogTab>连接管</DialogTab>
          <DialogTab>字体</DialogTab>
          <DialogTab $active>数据/结果区域</DialogTab>
        </DialogTabs>
        <TabPanel>
          <DataTree />
          <div>
            <Field>
              <label htmlFor="position">位置</label>
              <SelectFrame $height={18} $bg="#e6e6e6">
                <select id="position"><option /></select>
                <SelectArt $width="24px" $height={13} viewBox="0 0 24 13">
                  <rect x="0.5" y="0.5" width="23" height="12" fill="#b5b5b5" stroke="#777" />
                  <path d="M4 6.500h8" stroke="#22e" />
                  <rect x="3" y="5" width="3" height="3" fill="#11e" />
                  <text x="12" y="8" fontSize="4" fontFamily="Liberation Sans">TEXT</text>
                </SelectArt>
                <Caret />
              </SelectFrame>
            </Field>
            <Field>
              <label htmlFor="prefix">前缀</label>
              <FieldRow>
                <Check type="checkbox" aria-label="前缀" />
                <TextField id="prefix" $soft defaultValue="中圈,供冷=" />
                <button aria-label="前缀变量"><Icon name="screen" size={9} /></button>
              </FieldRow>
            </Field>
            <Field>
              <label htmlFor="suffix">后缀</label>
              <FieldRow>
                <Check type="checkbox" aria-label="后缀" />
                <TextField id="suffix" $soft defaultValue=" W" />
                <button aria-label="后缀变量"><Icon name="screen" size={9} /></button>
              </FieldRow>
            </Field>
            <Field>
              <label htmlFor="scale">相对字体尺寸</label>
              <Spin>
                <input id="scale" defaultValue="100.00%" />
                <SpinArrows><Caret /><Caret /></SpinArrows>
              </Spin>
            </Field>
            <Field>
              <label htmlFor="align">对齐</label>
              <SelectFrame $height={17} $bg="#e6e6e6">
                <select id="align"><option /></select>
                <SelectArt $width="24px" $height={14} viewBox="0 0 24 14">
                  <rect width="24" height="14" fill="#c6c6c6" />
                  <text x="1" y="11" fontSize="10" fontFamily="Open Sans">TEXT</text>
                  <rect x="1" y="1" width="3" height="3" fill="#11e" />
                </SelectArt>
                <Caret />
              </SelectFrame>
            </Field>
          </div>
        </TabPanel>
      </Stack>
      <Preview>
        <PreviewLabel>
          <svg aria-hidden="true">
            <rect width="100%" height="100%" rx="21" fill="none" stroke="#999" strokeDasharray="15 8" />
          </svg>
          <div>ABCxyz</div>
          <div>规格123</div>
          <div>Φ供热=12.34 W</div>
          <div>Φ供冷=12.34 W</div>
        </PreviewLabel>
      </Preview>
    </DialogBody>
    <DialogButtons>
      <PushButton>OK</PushButton>
      <PushButton>取消</PushButton>
    </DialogButtons>
  </Dialog>
);

const RibbonGroups = () => (
  <Ribbon>
    <Group $width={53}>
      <GroupBody $gap={2}>
        <Big icon="calc" width={16} caret />
        <Tools cols={3} names={['crate', 'greyDoc', 'yellow', 'person', 'bar', 'boxPen']} />
      </GroupBody>
      <GroupName>计算</GroupName>
    </Group>
    <Group $width={108}>
      <GroupBody>
        <Tools
          cols={9}
          names={[
            'undo', 'copy', 'paste', 'cut', 'cross', 'spread', 'mirror', 'slope', 'caret',
            'moon', 'panes', 'vline', 'vdots', 'squares', 'expand', 'mirror', 'lines', null,
          ]}
        />
        <Big icon="marquee" label="选择" width={16} caret />
      </GroupBody>
      <GroupName>编辑</GroupName>
    </Group>
    <Group $width={50}>
      <GroupBody>
        <Tools
          cols={4}
          names={['zoomIn', 'zoomOut', 'zoomFit', 'zoomWin', 'zoomSel', 'zoomPage', 'zoomPage', null]}
        />
        <Tools cols={1} names={['caret']} />
      </GroupBody>
      <GroupName>视图</GroupName>
    </Group>
    <Group $width={23}>
      <GroupBody><Big icon="house" width={18} size={15} caret /></GroupBody>
      <GroupName>窗口</GroupName>
    </Group>
    <Group $width={149}>
      <GroupBody>
        <Big icon="importMap" label="导入底图" width={23} muted />
        <Big icon="ratio" label="确定比例" width={22} muted />
        <Big icon="refPoint" label="参考点" width={18} muted />
        <Big icon="cropMap" label="减小可见的底图区域" width={49} muted />
        <Big icon="alignMap" label="调正图形" width={22} muted />
        <Tools cols={1} names={['film', 'disk']} />
      </GroupBody>
      <GroupName>底图</GroupName>
    </Group>
    <Group $width={82}>
      <GroupBody>
        <Big icon="tag" label="标签" width={18} muted caret />
        <Big icon="dimension" label="尺寸线" width={19} muted caret />
        <Tools cols={4} names={['hatch', 'legend', 'list', 'cloud', 'frame', 'chart', 'Abc', null]} />
      </GroupBody>
      <GroupName>标签和图形</GroupName>
    </Group>
  </Ribbon>
);

const App = () => (
  <Desktop>
    <GlobalStyle />
    <Notch />
    <Window>
      <TitleBar>
        <QuickAccess>
          <Icon name="drop" />
          <IconButton aria-label="保存"><Icon name="save" /></IconButton>
          <IconButton aria-label="打开"><Icon name="folder" /></IconButton>
          <IconButton aria-label="新建"><Icon name="page" /></IconButton>
        </QuickAccess>
        <WindowTitle>
          C:\Users\tiger\Documents\InstalSystem 5 CN (BETA)\在线帮助系统文件\Installation-with-ceiling-systems-in-commercial-building.isproj* - InstalSystem Editor 5 CN (BETA) (修改 6.81)
        </WindowTitle>
        <WindowButtons>
          <IconButton aria-label="最小化"><Icon name="minimize" size={5} /></IconButton>
          <IconButton aria-label="还原"><Icon name="restore" size={5} /></IconButton>
          <IconButton aria-label="关闭"><Icon name="close" size={6} /></IconButton>
        </WindowButtons>
      </TitleBar>
      <RibbonTabs>
        <FileTab>文件</FileTab>
        <MainTab>主要工具</MainTab>
        <RibbonRight>
          <Icon name="layout" />
          <span>更改屏幕的窗口布置</span>
          <Caret />
          <Brand><Icon name="drop" size={10} />INSTALSYSTEM</Brand>
          <IconButton aria-label="帮助"><Icon name="help" /></IconButton>
          <IconButton aria-label="折叠"><Icon name="chevron" size={5} /></IconButton>
        </RibbonRight>
      </RibbonTabs>
      <RibbonGroups />
      <Workspace>
        <Pane>
          <TabStrip $gap={5}>
            <DocTab $tone="grey"><Icon name="flag" size={6} />一般参数<Icon name="close" size={5} /></DocTab>
            <DocTab><Icon name="pencil" size={7} />2D编辑器</DocTab>
            <DocTab><Icon name="report" size={7} />结果</DocTab>
            <DocTab><Icon name="printer" size={7} />打印输出</DocTab>
            <Caret />
          </TabStrip>
          <Columns>
            <ProjectTree />
            <Editor>
              <EditorHead>
                <NavButtons>
                  <svg width="34" height="16" viewBox="0 0 34 16" aria-hidden="true">
                    <rect x="11" y="3" width="21" height="10" fill="#e2e2e2" stroke="#d2d2d2" />
                    <circle cx="7.500" cy="8" r="7" fill="#f2f2f2" stroke="#d0d0d0" />
                    <path d="M3 8l4-4v2.500h5v3H7V12z" fill="#fff" stroke="#c8c8c8" />
                    <path d="M16 6l2-1.500L20 6M16.500 7.500h3v3h-3zM25 5l2 2 2-2M25 8l2 2 2-2" fill="none" stroke="#b2b2b2" />
                  </svg>
                </NavButtons>
                <Heading>部件外观配置 / 部件类型</Heading>
              </EditorHead>
              <EditorBody>
                <Stack>
                  <Caption>部件型号</Caption>
                  <PartList />
                  <RestoreButton><Icon name="undo" />恢复省缺值</RestoreButton>
                </Stack>
                <Stack>
                  <Caption>对于选定的部件类型其可用的样式</Caption>
                  <StyleArea>
                    <StylesTable />
                    <SideButtons>
                      <IconButton aria-label="上移"><Icon name="up" size={7} /></IconButton>
                      <IconButton aria-label="下移"><Icon name="down" size={7} /></IconButton>
                      <IconButton aria-label="撤销"><Icon name="undo" /></IconButton>
                    </SideButtons>
                  </StyleArea>
                  <Caption $top={3}>对于选定的部件类型其可用的标签样式</Caption>
                  <LabelStylesTable />
                </Stack>
              </EditorBody>
            </Editor>
          </Columns>
        </Pane>
        <Pane>
          <TabStrip $gap={2}>
            <DocTab><Icon name="ruler" size={7} />参数表</DocTab>
            <DocTab><Icon name="browser" size={7} />项目浏览器</DocTab>
            <DocTab><Icon name="zoomFit" size={7} />寻找</DocTab>
            <DocTab $tone="blue">
              <Icon name="pencil" size={7} />3D视图<Icon name="pin" size={5} /><Icon name="close" size={5} />
            </DocTab>
          </TabStrip>
          <Model />
          <SheetTabs>
            <SheetTab>对...</SheetTab>
            <SheetTab><Icon name="cross" size={6} />绘...</SheetTab>
            <SheetTab><Icon name="cross" size={6} />绘...</SheetTab>
            <SheetTab><Icon name="cross" size={6} />干...</SheetTab>
            <SheetTab><Icon name="bulb" size={6} />打...</SheetTab>
            <Caret />
          </SheetTabs>
          <StatusBar>
            <Icon name="warn" />
            <Coordinates>0.020, -10.034, -5.930</Coordinates>
            <StatusToggle $on>定向线</StatusToggle>
            <StatusToggle>上锁</StatusToggle>
            <StatusToggle>栅格</StatusToggle>
            <StatusToggle $on>自动</StatusToggle>
            <StatusToggle>重复</StatusToggle>
            <Caret $color="#fff" />
          </StatusBar>
        </Pane>
      </Workspace>
      <Footer>
        <DocTab as="div">
          <Icon name="diag" size={7} />诊断<Icon name="pin" size={5} /><Icon name="close" size={5} />
        </DocTab>
      </Footer>
    </Window>
    <Taskbar>
      <TaskItem $col={2} $color="#333" />
      <TaskItem $col={4} $color="#a3581d" />
      <TaskItem $col={6} $color="#333" />
    </Taskbar>
    <LabelDialog />
  </Desktop>
);

export default App;
